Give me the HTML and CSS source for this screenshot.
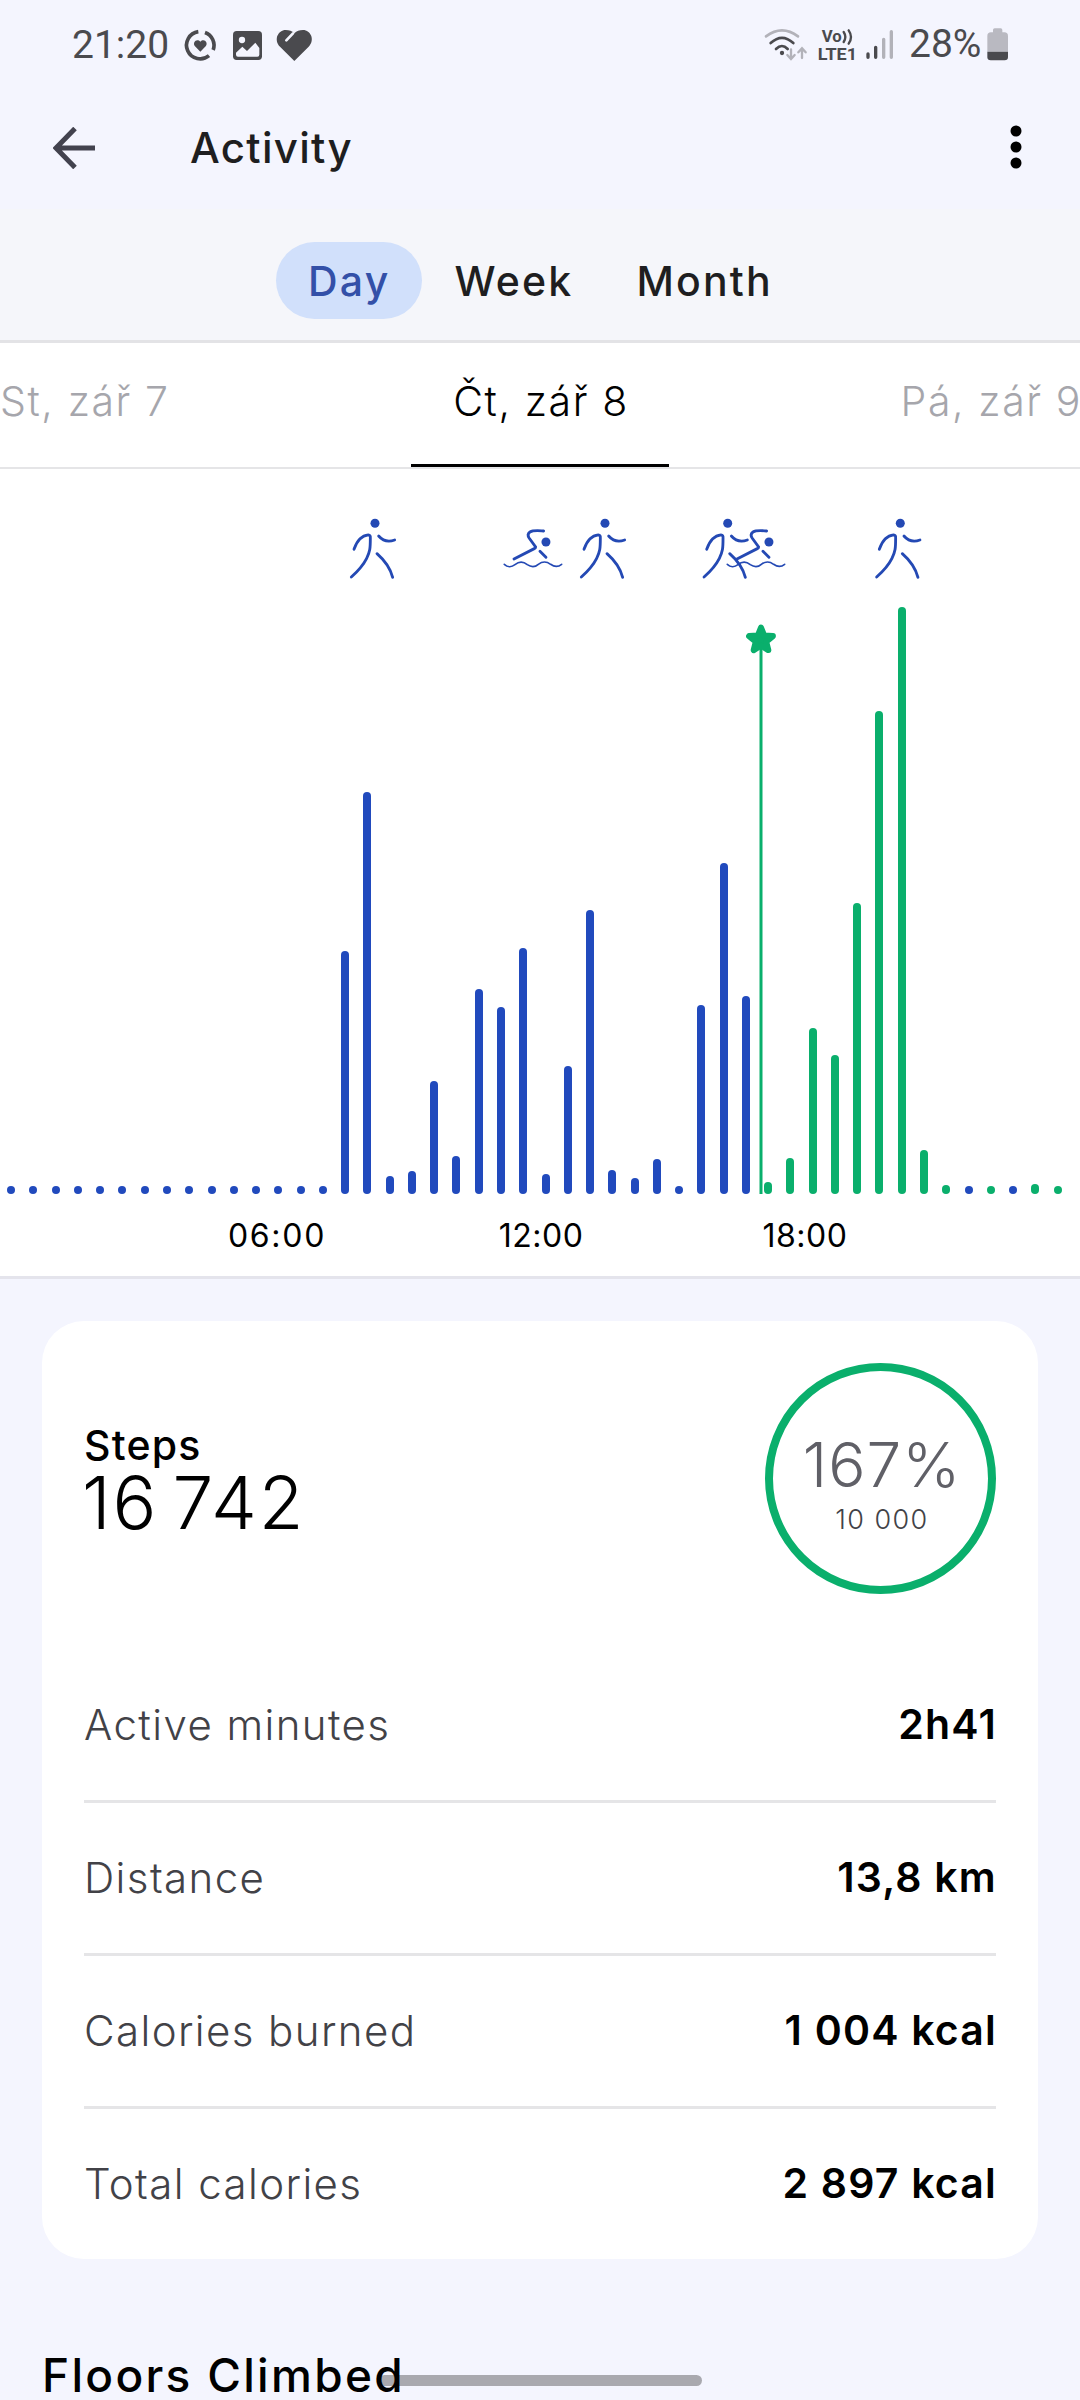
FILE: index.html
```html
<!DOCTYPE html>
<html lang="en">
<head>
    <meta charset="UTF-8">
    <meta name="viewport" content="width=device-width, initial-scale=1.0">
    <title>Activity</title>
    <link rel="stylesheet" href="styles.css">
</head>
<body>
    <div class="status-bar">
        <span class="time">21:20</span>
        <svg class="status-left" viewBox="0 0 480 150" fill="#4a4a4e">
            <g fill="none" stroke="#4a4a4e" stroke-width="11">
                <path d="M117 107A41 41 0 1 1 85 35"/>
                <path d="M105 37.500A41 41 0 0 1 129.500 90"/>
            </g>
            <path d="M91 95L75 79C66 68 80 53 91 65C102 53 116 68 107 79Z"/>
            <rect x="189" y="33" width="87" height="87" rx="11"/>
            <circle cx="216" cy="60" r="9.500" fill="#f4f5fe"/>
            <path d="M198 98L217 80L231 93L256 68L268 84V104Q268 110 262 110H204Q198 110 198 104Z" fill="#f4f5fe"/>
            <path d="M373 123L330 80C310 60 324 30 347 30C358 30 366 33 373 40C380 33 388 30 399 30C422 30 436 60 416 80Z"/>
            <path d="M349 61L369 40" stroke="#f4f5fe" stroke-width="8" stroke-linecap="round"/>
        </svg>
        <svg class="status-right" viewBox="0 0 795 150" fill="#4a4a4e">
            <g fill="none" stroke="#4a4a4e" stroke-width="8" stroke-linecap="round">
                <path d="M33 49Q81 13 129 49" stroke="#b2b2b9"/>
                <path d="M47 69Q81 38 115 69"/>
                <path d="M63 87Q81 69 98 87"/>
                <path d="M108 88V116M97 105L108 117L119 105M141 114V86M130 97L141 85L152 97" stroke="#b2b2b9" stroke-width="7"/>
                <path d="M266 36Q276 51 266 66M281 31Q295 51 281 71" stroke-width="7"/>
            </g>
            <circle cx="81" cy="99" r="6.500"/>
            <text class="net" x="200" y="67" textLength="60" lengthAdjust="spacingAndGlyphs">Vo</text>
            <text class="net" x="188" y="119" textLength="118" lengthAdjust="spacingAndGlyphs">LTE1</text>
            <g stroke-width="10" stroke-linecap="round">
                <path d="M339 102V112M362 82V112" stroke="#4a4a4e"/>
                <path d="M386 58V112M409 35V112" stroke="#b2b2b9"/>
            </g>
            <text class="battery-text" x="462" y="110" textLength="217">28%</text>
            <path d="M714 37V30Q714 25 719 25H737Q742 25 742 30V37H748Q759 37 759 48V95H697V48Q697 37 708 37Z" fill="#b9b9c1"/>
            <path d="M697 95H759V111Q759 121 749 121H707Q697 121 697 111Z"/>
        </svg>
    </div>

    <header class="app-bar">
        <svg class="back" viewBox="0 0 42 42" fill="none" stroke="#42424e" stroke-width="5">
            <path d="M42 21H4M22 1.500L3 21L22 40.500"/>
        </svg>
        <h1>Activity</h1>
        <svg class="more" viewBox="0 0 12 44">
            <circle cx="6" cy="6" r="5.500"/>
            <circle cx="6" cy="22" r="5.500"/>
            <circle cx="6" cy="38" r="5.500"/>
        </svg>
    </header>

    <nav class="tabs">
        <a class="tab active">Day</a>
        <a class="tab">Week</a>
        <a class="tab">Month</a>
    </nav>

    <div class="dates">
        <span class="date prev">St, zář 7</span>
        <span class="date current">Čt, zář 8</span>
        <span class="date next">Pá, zář 9</span>
    </div>

    <section class="chart">
        <div class="bars" id="bars"></div>
        <!-- workouts and goal marker, drawn over the bars -->
        <svg class="overlay" viewBox="0 0 1080 725">
            <defs>
                <g id="walk" fill="none" stroke="#2449b4" stroke-width="8.500" stroke-linecap="round">
                    <circle cx="75" cy="15" r="13.500" fill="#2449b4" stroke="none"/>
                    <path d="M12 93C20 70 35 52 55 50Q62 50 61 60C61 90 60 100 50 120C40 140 22 160 4 176"/>
                    <path d="M86 53C98 67 115 72 134 65"/>
                    <path d="M81 106C105 127 120 147 128 177"/>
                </g>
                <g id="swim" fill="none" stroke="#2449b4" stroke-width="8.500" stroke-linecap="round">
                    <circle cx="128" cy="71" r="13.500" fill="#2449b4" stroke="none"/>
                    <path d="M121 38C105 37 90 35 80 41Q70 48 78 60L97 86Q97 89 93 91L32 122"/>
                    <path d="M110 99L128 117"/>
                    <path d="M3 138C12 147 25 147 35 139C47 129 60 129 72 139C84 147 95 147 105 138C117 129 130 129 142 138C155 147 165 146 175 138" stroke-width="5"/>
                </g>
            </defs>
            <use href="#walk" transform="translate(350 49.300) scale(.3333)"/>
            <use href="#swim" transform="translate(503.300 49.300) scale(.3333)"/>
            <use href="#walk" transform="translate(580 49.300) scale(.3333)"/>
            <use href="#walk" transform="translate(702.700 49.300) scale(.3333)"/>
            <use href="#swim" transform="translate(726.300 49.300) scale(.3333)"/>
            <use href="#walk" transform="translate(875.300 49.300) scale(.3333)"/>
            <path d="M761 171V725" stroke="#0aaf6c" stroke-width="3"/>
            <path transform="translate(761 171)" d="M0 -12.500L3.200 -4.400L11.900 -3.900L5.200 1.700L7.300 10.100L0 5.500L-7.300 10.100L-5.200 1.700L-11.900 -3.900L-3.200 -4.400Z" fill="#0aaf6c" stroke="#0aaf6c" stroke-width="6" stroke-linejoin="round"/>
        </svg>
        <div class="hours">
            <span class="wide">06:00</span>
            <span>12:00</span>
            <span>18:00</span>
        </div>
    </section>

    <main class="card">
        <div class="summary">
            <div>
                <h2>Steps</h2>
                <div class="total">16 742</div>
            </div>
            <div class="ring">
                <span class="percent">167%</span>
                <span class="goal">10 000</span>
            </div>
        </div>
        <div class="row"><span>Active minutes</span><strong>2h41</strong></div>
        <div class="row"><span>Distance</span><strong>13,8 km</strong></div>
        <div class="row"><span>Calories burned</span><strong>1 004 kcal</strong></div>
        <div class="row"><span>Total calories</span><strong>2 897 kcal</strong></div>
    </main>

    <h2 class="next-title">Floors Climbed</h2>
    <div class="home-bar"></div>

    <script>
        // one bar per half hour, height in px
        const heights = [
            8, 8, 8, 8, 8, 8, 8, 8, 8, 8, 8, 8, 8, 8, 8, 243,
            402, 18, 23, 113, 38, 205, 187, 246, 20, 128, 284, 24, 16, 35, 8, 189,
            331, 198, 12, 36, 166, 139, 291, 483, 587, 44, 9, 8, 8, 8, 10, 8
        ];
        const bars = document.getElementById('bars');

        heights.forEach((height, i) => {
            const bar = document.createElement('div');
            bar.className = 'bar';
            // steps made after the goal was reached
            if (i >= 34 && i !== 43 && i !== 45) {
                bar.classList.add('over');
            }
            bar.style.height = height + 'px';
            bars.appendChild(bar);
        });
    </script>
</body>
</html>
```

FILE: styles.css
```css
* {
    box-sizing: border-box;
}
body {
    position: relative;
    width: 1080px;
    height: 2400px;
    margin: 0;
    overflow: hidden;
    background-color: #f4f5fe;
    color: #000;
    font-family: Inter, "Open Sans", sans-serif;
}
h1, h2 {
    margin: 0;
    font-weight: 500;
}
.status-bar {
    display: flex;
    align-items: center;
    height: 90px;
    padding: 0 60px 0 72px;
    color: #4a4a4e;
    font-family: Roboto, sans-serif;
}
.time {
    width: 98px;
    font-size: 39px;
    line-height: 88px;
}
.status-left {
    width: 160px;
    height: 50px;
}
.status-right {
    width: 265px;
    height: 50px;
    margin-left: auto;
}
.net {
    font-size: 51px;
    font-weight: 700;
}
.battery-text {
    font-size: 117px;
}
.app-bar {
    display: flex;
    align-items: center;
    height: 119px;
    padding: 0 58px 4px 53px;
}
.back {
    width: 42px;
    height: 42px;
}
.app-bar h1 {
    margin-left: 95px;
    color: #1e1e20;
    font-size: 42px;
    letter-spacing: 1.3px;
    line-height: 54px;
}
.more {
    width: 12px;
    height: 44px;
    margin-bottom: 1px;
    margin-left: auto;
}
.tabs {
    display: flex;
    justify-content: center;
    height: 134px;
    padding: 33px 0 0;
    background-color: #f5f6fa;
    border-bottom: 3px solid #e3e3e6;
}
.tab {
    height: 77px;
    padding: 0 31px 0 32px;
    border-radius: 39px;
    color: #1e1e20;
    font-size: 41px;
    font-weight: 500;
    letter-spacing: 2.2px;
    line-height: 79px;
}
.tab.active {
    padding-right: 32px;
    background-color: #d1e0fb;
    color: #3350a8;
}
.dates {
    display: grid;
    grid-template-columns: 1fr 258px 1fr;
    height: 126px;
    background-color: #fff;
    border-bottom: 2px solid #e5e5e7;
}
.date {
    color: #a6a6ac;
    font-size: 41px;
    font-weight: 300;
    letter-spacing: 1.6px;
    line-height: 117px;
}
.date.current {
    padding-left: 2px;
    border-bottom: 3px solid #000;
    color: #000;
    text-align: center;
}
.date.next {
    margin-right: -2px;
    text-align: right;
}
.chart {
    position: relative;
    background-color: #fff;
    border-bottom: 3px solid #e4e4ec;
}
.bars {
    display: flex;
    justify-content: space-around;
    align-items: flex-end;
    height: 725px;
    padding-right: 11px;
}
.bar {
    width: 8px;
    background-color: #214abd;
    border-radius: 4px;
}
.bar.over {
    background-color: #0aaf6c;
}
.overlay {
    position: absolute;
    top: 0;
    left: 0;
    width: 1080px;
    height: 725px;
}
.hours {
    display: grid;
    grid-template-columns: repeat(3, 264px);
    height: 82px;
    padding-left: 145px;
    font-size: 32px;
    letter-spacing: 0.5px;
    line-height: 84px;
    text-align: center;
}
.hours .wide {
    letter-spacing: 1.7px;
}
.card {
    height: 938px;
    margin: 42px 42px 0;
    padding: 42px 42px 0;
    background-color: #fff;
    border-radius: 42px;
}
.summary {
    display: flex;
    justify-content: space-between;
    align-items: center;
    height: 231px;
    margin-bottom: 56px;
}
.summary h2 {
    font-size: 41px;
    letter-spacing: 1.2px;
    line-height: 50px;
    margin-top: -2px;
}
.total {
    margin-left: -2px;
    font-size: 73px;
    font-weight: 300;
    letter-spacing: 1.8px;
    line-height: 66px;
    word-spacing: -8px;
}
.ring {
    display: flex;
    flex-direction: column;
    align-items: center;
    justify-content: center;
    width: 231px;
    height: 231px;
    padding: 11px 0 0 3px;
    border: 8px solid #0aaf6c;
    border-radius: 50%;
}
.percent {
    color: #606067;
    font-size: 62px;
    font-weight: 300;
    letter-spacing: 1px;
    line-height: 71px;
}
.goal {
    color: #424247;
    font-size: 27px;
    font-weight: 300;
    letter-spacing: 1.4px;
    line-height: 40px;
}
.row {
    display: flex;
    justify-content: space-between;
    height: 153px;
    border-bottom: 3px solid #e5e5e7;
    font-size: 41px;
    line-height: 149px;
}
.row:last-child {
    height: 150px;
    border-bottom: none;
}
.row span {
    color: #424247;
    font-size: 42px;
    font-weight: 300;
    letter-spacing: 1.4px;
}
.row strong {
    margin-right: -1px;
    font-weight: 600;
    letter-spacing: 1.2px;
}
.next-title {
    position: relative;
    z-index: 1;
    margin: 86px 42px 0;
    font-size: 46px;
    letter-spacing: 2.3px;
    line-height: 60px;
}
.home-bar {
    position: absolute;
    top: 2375px;
    left: 379px;
    width: 323px;
    height: 11px;
    border-radius: 6px;
    background-color: #a9a9af;
}
```
